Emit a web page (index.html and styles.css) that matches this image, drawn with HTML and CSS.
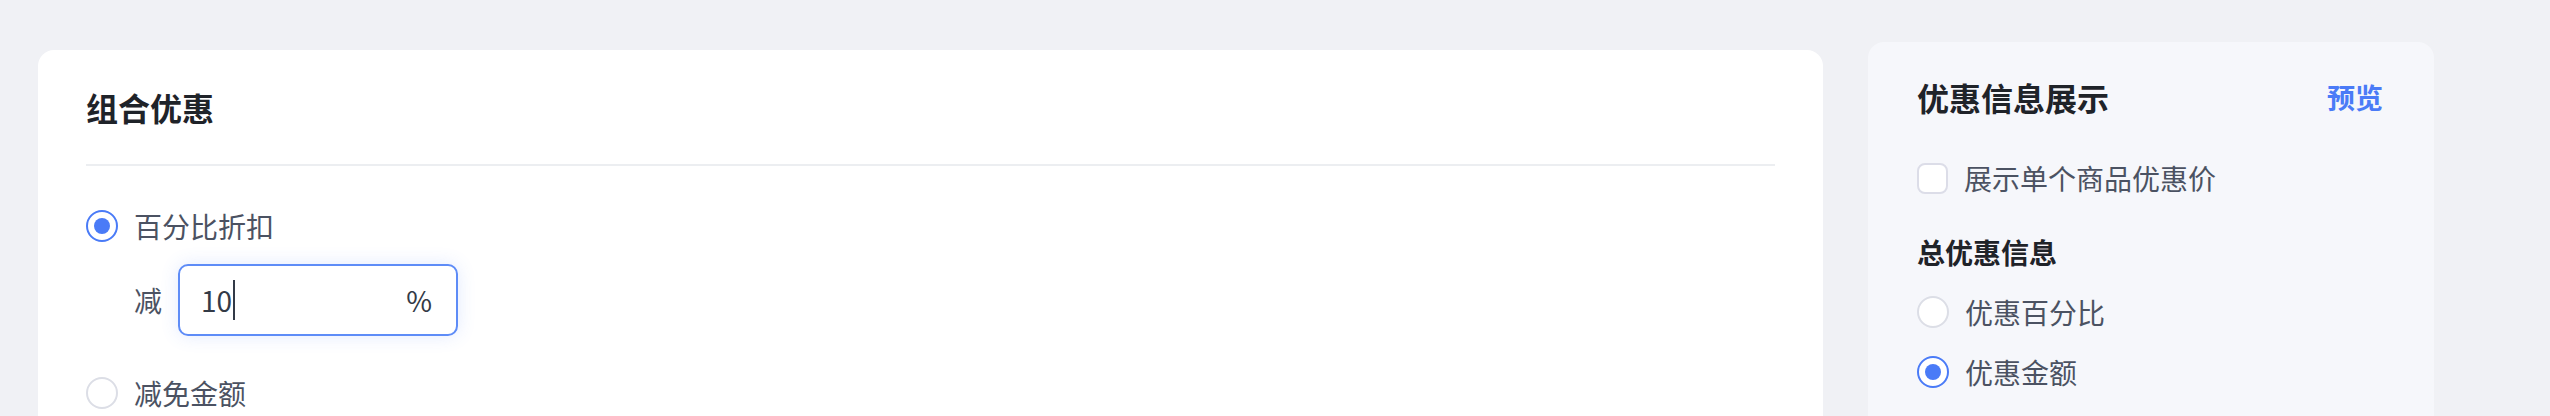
FILE: index.html
```html
<!DOCTYPE html>
<html lang="zh-CN">
<head>
<meta charset="utf-8">
<title>组合优惠</title>
<link rel="stylesheet" href="styles.css">
</head>
<body>
<div class="page">
  <section class="card">
    <h2 class="card-title">组合优惠</h2>
    <div class="divider"></div>
    <div class="options">
      <div class="option">
        <span class="radio checked"></span>
        <span class="opt-label">百分比折扣</span>
      </div>
      <div class="sub-row">
        <span class="opt-label">减</span>
        <div class="field">
          <span class="field-value">10<span class="caret"></span></span>
          <span class="field-suffix">%</span>
        </div>
      </div>
      <div class="option opt-second">
        <span class="radio"></span>
        <span class="opt-label">减免金额</span>
      </div>
    </div>
  </section>
  <aside class="panel">
    <div class="panel-head">
      <h2 class="panel-title">优惠信息展示</h2>
      <span class="link">预览</span>
    </div>
    <div class="option check-row">
      <span class="checkbox"></span>
      <span class="opt-label">展示单个商品优惠价</span>
    </div>
    <h3 class="group-title">总优惠信息</h3>
    <div class="radio-group">
      <div class="option">
        <span class="radio"></span>
        <span class="opt-label">优惠百分比</span>
      </div>
      <div class="option">
        <span class="radio checked"></span>
        <span class="opt-label">优惠金额</span>
      </div>
    </div>
  </aside>
</div>
</body>
</html>
```
FILE: styles.css
```css
* { box-sizing: border-box; }
html, body { margin: 0; padding: 0; }
body {
  background: #f0f1f5;
  font-family: "Noto Sans CJK SC", "Noto Sans", sans-serif;
  color: #4b5262;
  height: 416px;
  overflow: hidden;
}
.page {
  display: flex;
  align-items: flex-start;
  gap: 45px;
  padding: 42px 0 0 38px;
}
.card {
  margin-top: 8px;
  width: 1785px;
  height: 366px;
  background: #ffffff;
  border-radius: 16px 16px 0 0;
  padding: 35px 48px 0 48px;
}
.card-title {
  margin: 0;
  font-size: 32px;
  line-height: 44px;
  font-weight: 700;
  color: #1f2329;
}
.divider {
  margin-top: 35px;
  height: 2px;
  background: #eceef1;
}
.options {
  display: flex;
  flex-direction: column;
  padding-top: 44px;
}
.option {
  display: flex;
  align-items: center;
  gap: 16px;
  height: 32px;
}
.opt-label {
  font-size: 28px;
  line-height: 32px;
  color: #4b5262;
}
.radio {
  width: 32px;
  height: 32px;
  border-radius: 50%;
  border: 2px solid #dcdee6;
  background: #ffffff;
  display: flex;
  align-items: center;
  justify-content: center;
  flex-shrink: 0;
}
.radio.checked {
  border-color: #4a7bf7;
}
.radio.checked::after {
  content: "";
  width: 16px;
  height: 16px;
  border-radius: 50%;
  background: #4a7bf7;
}
.sub-row {
  display: flex;
  align-items: center;
  gap: 16px;
  margin-top: 22px;
  padding-left: 48px;
}
.field {
  width: 280px;
  height: 72px;
  border: 2px solid #5e8cf7;
  border-radius: 10px;
  background: #ffffff;
  box-shadow: 0 0 18px rgba(74, 123, 247, 0.16);
  display: flex;
  align-items: center;
  justify-content: space-between;
  padding: 0 24px 0 21px;
}
.field-value {
  display: flex;
  align-items: center;
  font-size: 28px;
  line-height: 40px;
  color: #333a47;
}
.caret {
  display: inline-block;
  width: 2px;
  height: 40px;
  background: #333a47;
  margin-left: 1px;
}
.field-suffix {
  font-size: 28px;
  color: #333a47;
}
.opt-second {
  margin-top: 41px;
}
.panel {
  width: 566px;
  height: 374px;
  background: #f6f7fb;
  border-radius: 16px 16px 0 0;
  padding: 33px 48px 0 49px;
}
.panel-head {
  display: flex;
  align-items: center;
  justify-content: space-between;
  height: 44px;
}
.panel-title {
  margin: 0;
  font-size: 32px;
  line-height: 44px;
  font-weight: 700;
  color: #1f2329;
}
.link {
  font-size: 28px;
  font-weight: 700;
  color: #4a7bf7;
  line-height: 44px;
  padding-right: 3px;
}
.check-row {
  margin-top: 43px;
}
.checkbox {
  width: 31px;
  height: 31px;
  border: 2px solid #dcdde8;
  border-radius: 8px;
  background: #ffffff;
  flex-shrink: 0;
}
.group-title {
  margin: 38px 0 0 0;
  font-size: 28px;
  line-height: 40px;
  font-weight: 700;
  color: #1f2329;
}
.radio-group {
  display: flex;
  flex-direction: column;
  gap: 28px;
  margin-top: 24px;
}
```
